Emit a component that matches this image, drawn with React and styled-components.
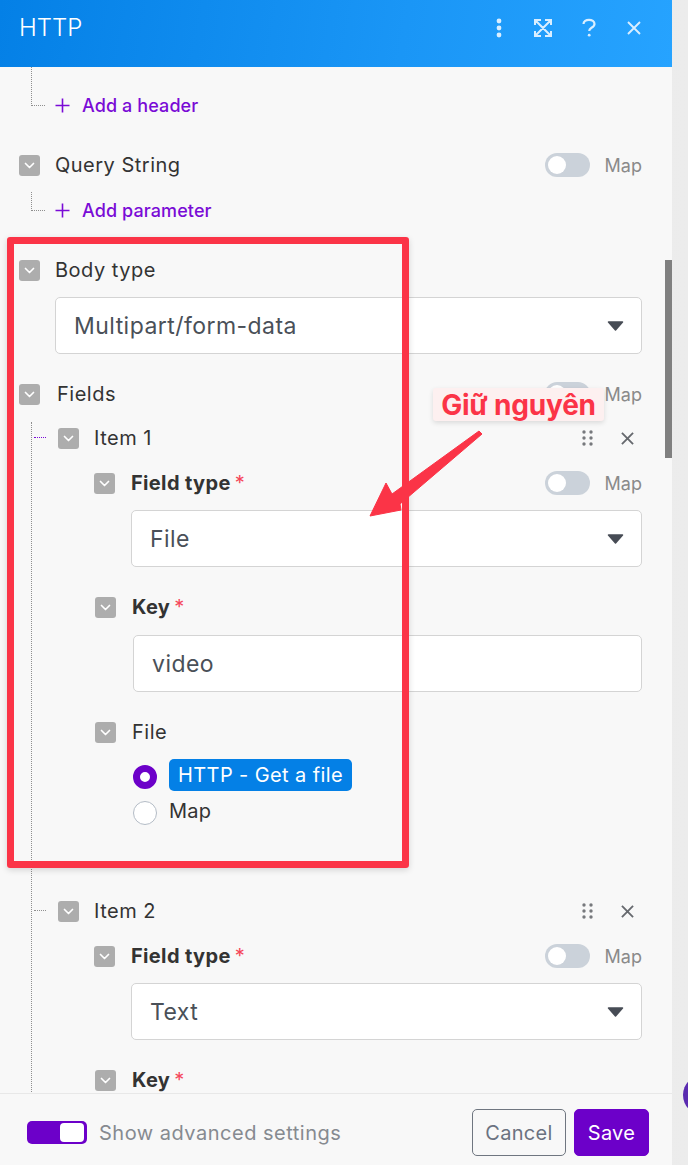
import React from "react";
import styled, { createGlobalStyle } from "styled-components";

const GlobalStyle = createGlobalStyle`
  html, body { margin: 0; padding: 0; background: #e4e4e4; }
  * { box-sizing: border-box; }
  body { font-family: Inter, "Liberation Sans", sans-serif; }
`;

const Page = styled.div`
  position: relative;
  width: 688px;
  height: 1165px;
  overflow: hidden;
  display: flex;
  background: linear-gradient(90deg, #e2e2e2, #ececec);
`;
const Panel = styled.div`
  width: 672px;
  height: 100%;
  display: flex;
  flex-direction: column;
  background: #f8f8f8;
`;
const Header = styled.header`
  height: 67px;
  flex: none;
  display: flex;
  align-items: flex-start;
  justify-content: space-between;
  padding: 14px 31px 0 19px;
  background: linear-gradient(100deg, #0480e6 0%, #1a96f6 60%, #26a3ff 100%);
  color: #fff;
`;
const Title = styled.h1`
  margin: 0;
  font-size: 24px;
  line-height: 28px;
  font-weight: 300;
`;
const HeaderIcons = styled.div`
  display: flex;
  align-items: center;
  height: 28px;
  color: #d9eeff;
`;
const HeaderIcon = styled.svg`
  display: block;
  width: ${(p) => p.$w}px;
  height: 22px;
  margin-left: ${(p) => p.$left}px;
`;
const Body = styled.main`
  position: relative;
  flex: 1;
  min-height: 0;
  overflow: hidden;
  padding: 0 30px 0 19px;
`;
const Row = styled.div`
  position: relative;
  display: flex;
  align-items: center;
  height: 22px;
  margin-top: ${(p) => p.$top}px;
  margin-left: ${(p) => p.$indent || 0}px;
`;
const Check = styled.span`
  flex: none;
  width: 21px;
  height: 21px;
  border-radius: 3px;
  background: #adadad;
  display: flex;
  align-items: center;
  justify-content: center;
`;
const Label = styled.span`
  margin-left: ${(p) => p.$gap}px;
  font-size: 20px;
  line-height: 24px;
  color: #333;
  font-weight: ${(p) => (p.$bold ? 700 : 400)};
  letter-spacing: ${(p) => (p.$bold ? "0.35px" : "0.5px")};
`;
const Star = styled.span`
  margin-left: 4px;
  font-size: 20px;
  color: #f5475b;
`;
const Spacer = styled.span`
  flex: ${(p) => (p.$fixed ? `0 0 ${p.$fixed}px` : 1)};
`;
const Toggle = styled.span`
  width: 45px;
  height: 24px;
  border-radius: 12px;
  background: #cbd2da;
  padding: 3px;
  display: flex;
`;
const Knob = styled.span`
  width: 18px;
  height: 18px;
  border-radius: 50%;
  background: #fff;
`;
const MapText = styled.span`
  margin-left: 15px;
  font-size: 18px;
  color: #8a8a8a;
`;
const AddRow = styled(Row)`
  padding-left: 36px;
  color: #7a0bd6;
  &::before {
    content: "";
    position: absolute;
    left: 12px;
    bottom: 10px;
    width: 13px;
    height: ${(p) => p.$stem}px;
    border-left: 1px dotted #8f8f8f;
    border-bottom: 1px dotted #8f8f8f;
  }
`;
const AddText = styled.span`
  margin-left: 12px;
  font-size: 18px;
  font-weight: 500;
  letter-spacing: 0.1px;
`;
const Field = styled.div`
  height: 57px;
  margin-top: ${(p) => p.$top}px;
  margin-left: ${(p) => p.$indent}px;
  padding: 0 17px 0 18px;
  display: flex;
  align-items: center;
  justify-content: space-between;
  background: #fff;
  border: 1px solid #d4d4d4;
  border-radius: 5px;
  font-size: 23px;
  color: #4a5058;
  letter-spacing: 0.45px;
`;
const Branch = styled.div`
  margin-top: 17px;
  margin-left: 12px;
  padding-top: 5px;
  border-left: 1px dotted #8f8f8f;
  height: 700px;
`;
const ItemRow = styled(Row)`
  margin-left: 26px;
  &::before {
    content: "";
    position: absolute;
    left: -24px;
    top: 10px;
    width: 12px;
    border-top: 1px dotted ${(p) => (p.$active ? "#7a0bd6" : "#8f8f8f")};
  }
`;
const ActionIcon = styled.svg`
  display: block;
  flex: none;
  margin-left: ${(p) => p.$left || 0}px;
`;
const RadioRow = styled.div`
  display: flex;
  align-items: flex-start;
  height: 32px;
  margin-top: ${(p) => p.$top}px;
  margin-left: 101px;
`;
const Radio = styled.span`
  flex: none;
  width: 24px;
  height: 24px;
  margin-top: 6px;
  margin-right: 12px;
  border-radius: 50%;
  background: #fff;
  border: ${(p) => (p.$on ? "7px solid #6c00c9" : "1px solid #b4bcc6")};
`;
const Pill = styled.span`
  height: 32px;
  padding: 0 9px;
  display: flex;
  align-items: center;
  border-radius: 5px;
  background: #0480e6;
  color: #fff;
  font-size: 20px;
  letter-spacing: 0.4px;
  white-space: nowrap;
`;
const RadioLabel = styled.span`
  font-size: 20px;
  line-height: 32px;
  color: #333;
  letter-spacing: 0.2px;
`;
const Footer = styled.footer`
  height: 72px;
  flex: none;
  display: flex;
  align-items: center;
  padding: 6px 23px 0 27px;
  border-top: 1px solid #e8e8e8;
  background: #f8f8f8;
`;
const AdvancedToggle = styled.span`
  width: 60px;
  height: 23px;
  padding: 2px 3px;
  border-radius: 5px;
  background: #6c00c9;
  display: flex;
  justify-content: flex-end;
`;
const AdvancedKnob = styled.span`
  width: 24px;
  height: 19px;
  border-radius: 4px;
  background: #fff;
`;
const AdvancedText = styled.span`
  margin-left: 12px;
  flex: 1;
  font-size: 20px;
  color: #868a90;
  letter-spacing: 0.5px;
`;
const Button = styled.button`
  height: 47px;
  margin-left: ${(p) => (p.$primary ? 8 : 0)}px;
  width: ${(p) => (p.$primary ? 75 : 94)}px;
  padding: 0;
  border-radius: 5px;
  border: 1px solid ${(p) => (p.$primary ? "#6c00c9" : "#6f7680")};
  background: ${(p) => (p.$primary ? "#6c00c9" : "transparent")};
  color: ${(p) => (p.$primary ? "#fff" : "#6b7280")};
  font: 400 20px Inter, "Liberation Sans", sans-serif;
  letter-spacing: 0.3px;
`;
const Scrollbar = styled.div`
  position: absolute;
  right: 0;
  top: 193px;
  width: 7px;
  height: 198px;
  background: #808080;
`;
const RedBox = styled.div`
  position: absolute;
  left: 7px;
  top: 237px;
  width: 402px;
  height: 631px;
  border: 7px solid #fb3447;
  border-radius: 3px;
  box-shadow: 0 2px 6px rgba(0, 0, 0, 0.15);
`;
const Callout = styled.div`
  position: absolute;
  left: 433px;
  top: 388px;
  width: 171px;
  height: 33px;
  display: flex;
  align-items: center;
  justify-content: center;
  border-radius: 3px;
  background: #fdf0f0;
  box-shadow: 0 2px 5px rgba(0, 0, 0, 0.12);
  color: #fb3447;
  font-size: 28px;
  font-weight: 700;
  letter-spacing: -0.2px;
  white-space: nowrap;
`;
const Arrow = styled.svg`
  position: absolute;
  left: 360px;
  top: 425px;
`;
const Peek = styled.div`
  position: absolute;
  left: 683px;
  top: 1075px;
  width: 40px;
  height: 40px;
  border-radius: 50%;
  background: #5a2bb0;
`;

const Caret = () => (
  <svg width="17" height="10" viewBox="0 0 17 10">
    <path d="M1.5 1h14L8.5 9z" fill="#474c55" stroke="#474c55" strokeWidth="1.5" strokeLinejoin="round" />
  </svg>
);
const Chevron = () => (
  <svg width="13" height="13" viewBox="0 0 13 13" fill="none">
    <path d="M2.5 4.5l4 4 4-4" stroke="#fff" strokeWidth="1.7" strokeLinecap="round" strokeLinejoin="round" />
  </svg>
);
const Plus = () => (
  <svg width="15" height="15" viewBox="0 0 15 15" fill="none">
    <path d="M7.5 0.5v14M0.5 7.5h14" stroke="currentColor" strokeWidth="1.6" />
  </svg>
);
const MapToggle = () => (
  <>
    <Spacer />
    <Toggle><Knob /></Toggle>
    <MapText>Map</MapText>
  </>
);
const ItemActions = () => (
  <>
    <Spacer />
    <ActionIcon width="11" height="16" viewBox="0 0 11 16" fill="#77797d">
      {[2, 8, 14].map((y) => (
        <React.Fragment key={y}>
          <circle cx="2" cy={y} r="1.7" />
          <circle cx="9" cy={y} r="1.7" />
        </React.Fragment>
      ))}
    </ActionIcon>
    <ActionIcon $left={28} width="13" height="13" viewBox="0 0 14 14" fill="none">
      <path d="M1 1l12 12M13 1L1 13" stroke="#66696e" strokeWidth="2" />
    </ActionIcon>
    <Spacer $fixed={8} />
  </>
);

export default function App() {
  return (
    <Page>
      <GlobalStyle />
      <Panel>
        <Header>
          <Title>HTTP</Title>
          <HeaderIcons>
            <HeaderIcon $w={6} $left={0} viewBox="0 0 6 22" fill="currentColor">
              <circle cx="3" cy="4" r="2.4" />
              <circle cx="3" cy="11" r="2.4" />
              <circle cx="3" cy="18" r="2.4" />
            </HeaderIcon>
            <HeaderIcon $w={20} $left={31} viewBox="0 0 20 22" fill="none" stroke="currentColor" strokeWidth="2">
              <path d="M2 8V3h6M18 8V3h-6M2 14v5h6M18 14v5h-6M3 4l14 14M17 4L3 18" />
            </HeaderIcon>
            <HeaderIcon $w={16} $left={28} viewBox="0 0 16 22" fill="none" stroke="currentColor" strokeWidth="2.2">
              <path d="M2.5 7C2.5 4.2 5 2.8 8 2.8s5.5 1.5 5.5 4.1c0 2-1.4 2.9-3 3.8-1.5.9-2.3 1.6-2.3 3.4" />
              <circle cx="8.2" cy="18.2" r="1.4" fill="currentColor" stroke="none" />
            </HeaderIcon>
            <HeaderIcon $w={14} $left={30} viewBox="0 0 14 22" fill="none" stroke="currentColor" strokeWidth="1.9">
              <path d="M1 5l12 12M13 5L1 17" />
            </HeaderIcon>
          </HeaderIcons>
        </Header>

        <Body>
          <AddRow $top={27} $stem={38}><Plus /><AddText>Add a header</AddText></AddRow>

          <Row $top={38}><Check><Chevron /></Check><Label $gap={15}>Query String</Label><MapToggle /></Row>
          <AddRow $top={23} $stem={18}><Plus /><AddText>Add parameter</AddText></AddRow>

          <Row $top={38}><Check><Chevron /></Check><Label $gap={15}>Body type</Label></Row>
          <Field $top={16} $indent={36}>Multipart/form-data<Caret /></Field>

          <Row $top={29}><Check><Chevron /></Check><Label $gap={17}>Fields</Label><MapToggle /></Row>
          <Branch>
            <ItemRow $active><Check><Chevron /></Check><Label $gap={15}>Item 1</Label><ItemActions /></ItemRow>
            <Row $top={23} $indent={62}><Check><Chevron /></Check><Label $gap={16} $bold>Field type</Label><Star>*</Star><MapToggle /></Row>
            <Field $top={16} $indent={99}>File<Caret /></Field>
            <Row $top={29} $indent={63}><Check><Chevron /></Check><Label $gap={16} $bold>Key</Label><Star>*</Star></Row>
            <Field $top={17} $indent={101}>video</Field>
            <Row $top={29} $indent={63}><Check><Chevron /></Check><Label $gap={16}>File</Label></Row>
            <RadioRow $top={16}><Radio $on /><Pill>HTTP - Get a file</Pill></RadioRow>
            <RadioRow $top={4}><Radio /><RadioLabel>Map</RadioLabel></RadioRow>

            <ItemRow $top={73}><Check><Chevron /></Check><Label $gap={15}>Item 2</Label><ItemActions /></ItemRow>
            <Row $top={23} $indent={62}><Check><Chevron /></Check><Label $gap={16} $bold>Field type</Label><Star>*</Star><MapToggle /></Row>
            <Field $top={16} $indent={99}>Text<Caret /></Field>
            <Row $top={29} $indent={63}><Check><Chevron /></Check><Label $gap={16} $bold>Key</Label><Star>*</Star></Row>
          </Branch>
          <Scrollbar />
        </Body>

        <Footer>
          <AdvancedToggle><AdvancedKnob /></AdvancedToggle>
          <AdvancedText>Show advanced settings</AdvancedText>
          <Button>Cancel</Button>
          <Button $primary>Save</Button>
        </Footer>
      </Panel>

      <Peek />
      <RedBox />
      <Callout>Giữ nguyên</Callout>
      <Arrow width="130" height="100" viewBox="0 0 130 100">
        <path d="M10 91L26 58 32 69 119 6 122 9 40 79 41 85z" fill="#fb3447" stroke="#fb3447" strokeLinejoin="round" />
      </Arrow>
    </Page>
  );
}
